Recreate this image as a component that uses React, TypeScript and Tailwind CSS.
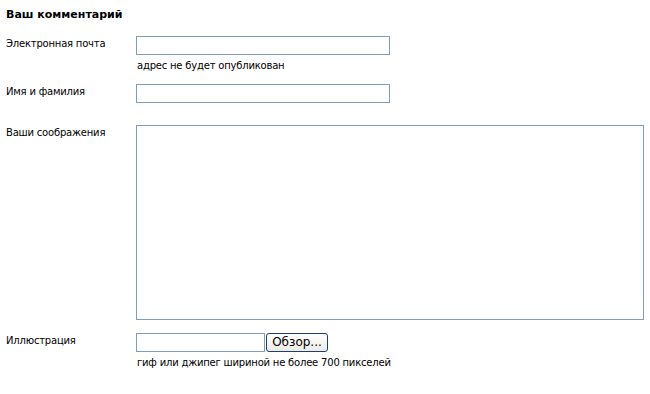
import React from 'react';

const inputCls = 'block h-[19px] border border-[#7f9db9] bg-white outline-none';

const App: React.FC = () => {
  return (
    <div className="w-[650px] h-[394px] bg-white text-black font-['DejaVu_Sans',Verdana,sans-serif] text-[10px] leading-[13px] tracking-[-0.2px] pl-[6px] pt-[8px]">
      <h3 className="font-bold text-[11px] leading-[14px] tracking-normal">Ваш комментарий</h3>

      <div className="grid grid-cols-[130px_1fr] mt-[14px]">
        <label className="pt-[1px]">Электронная почта</label>
        <div>
          <input type="text" className={`${inputCls} w-[254px]`} />
          <p className="mt-[4px] ml-[1px]">адрес не будет опубликован</p>
        </div>
      </div>

      <div className="grid grid-cols-[130px_1fr] mt-[12px]">
        <label className="pt-[1px]">Имя и фамилия</label>
        <input type="text" className={`${inputCls} w-[254px]`} />
      </div>

      <div className="grid grid-cols-[130px_1fr] mt-[22px]">
        <label className="pt-[1px]">Ваши соображения</label>
        <textarea className="block w-[508px] h-[195px] border border-[#7f9db9] bg-white outline-none resize-none" />
      </div>

      <div className="grid grid-cols-[130px_1fr] mt-[13px]">
        <label className="pt-[1px]">Иллюстрация</label>
        <div>
          <div className="flex items-center gap-[1px]">
            <input type="text" className={`${inputCls} w-[129px]`} />
            <button className="h-[19px] w-[62px] rounded-[3px] border border-[#1c3f6e] bg-gradient-to-b from-white to-[#ecebe4] text-[12px] leading-[15px] tracking-normal text-black">
              Обзор...
            </button>
          </div>
          <p className="mt-[4px] ml-[1px]">гиф или джипег шириной не более 700 пикселей</p>
        </div>
      </div>
    </div>
  );
};

export default App;
